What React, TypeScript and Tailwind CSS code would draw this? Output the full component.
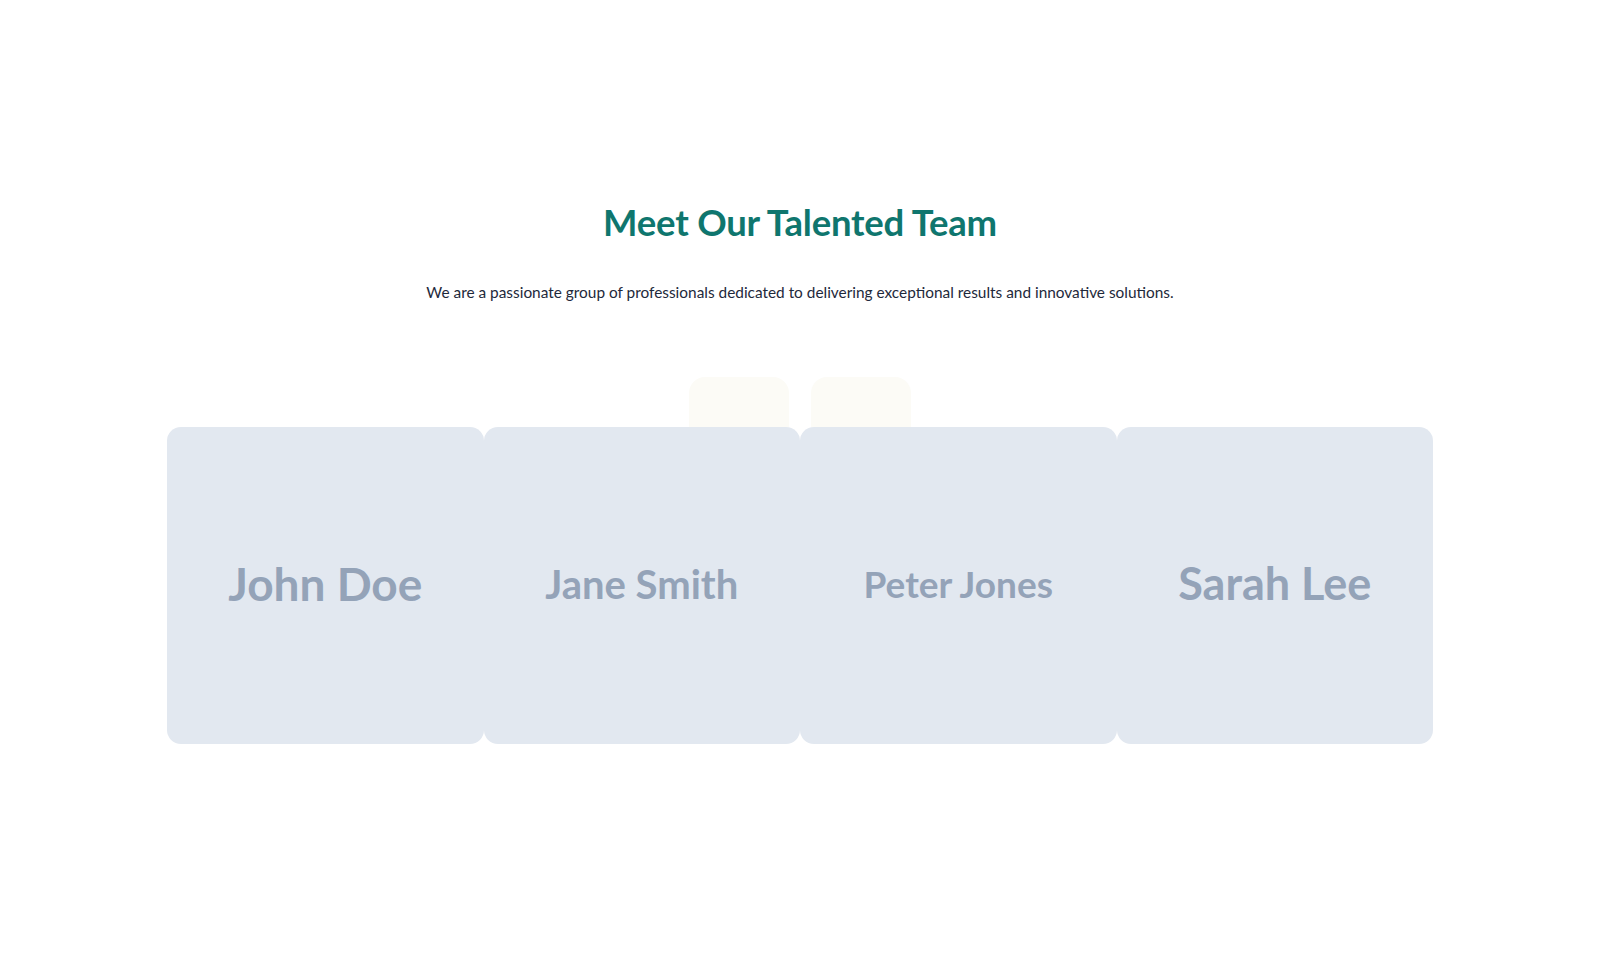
import React from "react";

const team = [
  { name: "John Doe", size: "text-[46px]" },
  { name: "Jane Smith", size: "text-[40px]" },
  { name: "Peter Jones", size: "text-[37px]" },
  { name: "Sarah Lee", size: "text-[45px]" },
];

export default function App() {
  return (
    <div className="min-h-screen w-full bg-white flex flex-col items-center" style={{ fontFamily: "Lato, 'Noto Sans', sans-serif" }}>
      <h1 className="mt-[198px] text-[36.5px] leading-[48px] font-bold text-[#0f766e] tracking-[-0.2px]">
        Meet Our Talented Team
      </h1>
      <p className="mt-[34px] text-[15.4px] leading-[24px] text-[#1e293b]">
        We are a passionate group of professionals dedicated to delivering exceptional results and innovative solutions.
      </p>

      <div className="mt-[73px] flex gap-[22px]">
        <div className="w-[100px] h-[50px] rounded-t-2xl bg-[#fcfbf6]" />
        <div className="w-[100px] h-[50px] rounded-t-2xl bg-[#fcfbf6]" />
      </div>

      <div className="grid grid-cols-4 w-[1266px]">
        {team.map((m) => (
          <div
            key={m.name}
            className="h-[317px] pb-[4px] rounded-[14px] bg-[#e2e8f0] flex items-center justify-center"
          >
            <span className={`${m.size} font-bold text-[#94a3b8]`}>{m.name}</span>
          </div>
        ))}
      </div>
    </div>
  );
}
